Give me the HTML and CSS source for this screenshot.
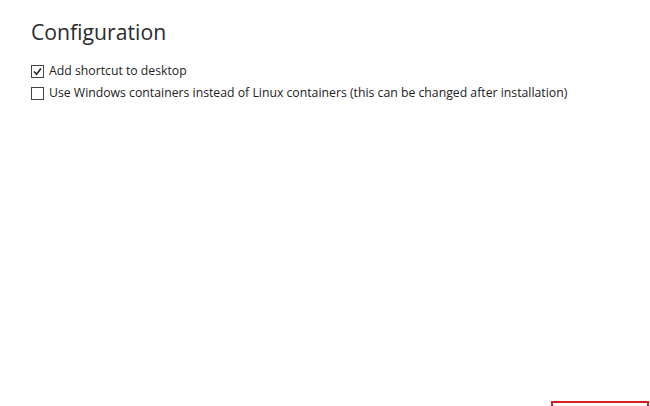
FILE: index.html
```html
<!DOCTYPE html>
<html>
<head>
<meta charset="utf-8">
<link rel="stylesheet" href="styles.css">
</head>
<body>
<div class="page">
  <h1 class="title">Configuration</h1>
  <div class="options">
    <label class="option">
      <span class="box checked"><svg viewBox="0 0 13 13" width="13" height="13"><path d="M3 6.5 L5.5 9.2 L10 3.5" fill="none" stroke="#222" stroke-width="1.6"/></svg></span>
      <span class="label">Add shortcut to desktop</span>
    </label>
    <label class="option">
      <span class="box"></span>
      <span class="label">Use Windows containers instead of Linux containers (this can be changed after installation)</span>
    </label>
  </div>
  <div class="footer">
    <div class="btn"></div>
  </div>
</div>
</body>
</html>
```
FILE: styles.css
```css
html, body {
  margin: 0;
  padding: 0;
  background: #fff;
}
body {
  width: 650px;
  height: 406px;
  overflow: hidden;
  font-family: "Open Sans", "Noto Sans", sans-serif;
  color: #222;
}
.page {
  height: 406px;
  display: flex;
  flex-direction: column;
  padding: 0 0 0 31px;
  box-sizing: border-box;
}
.title {
  margin: 16px 0 0 0;
  font-size: 21.2px;
  font-weight: 400;
  line-height: 32px;
  color: #2b2b2b;
}
.options {
  margin-top: 15px;
  display: flex;
  flex-direction: column;
  gap: 6px;
}
.option {
  display: flex;
  align-items: center;
  gap: 5px;
  font-size: 12.25px;
  line-height: 16px;
}
.box {
  width: 11px;
  height: 11px;
  border: 1px solid #444;
  display: flex;
  align-items: center;
  justify-content: center;
  background: #fff;
}
.box svg {
  flex: none;
}
.footer {
  margin-top: auto;
  display: flex;
  justify-content: flex-end;
  padding-right: 1px;
}
.btn {
  width: 94px;
  height: 3px;
  border: 2px solid #d42020;
  border-bottom: none;
}
```
